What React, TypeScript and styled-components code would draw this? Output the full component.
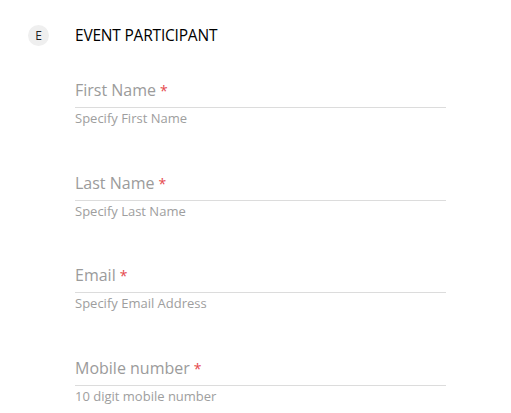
import React from 'react';
import styled, {createGlobalStyle} from 'styled-components';

const GlobalStyle = createGlobalStyle`
    body {
        margin: 0;
        background-color: white;
        font-family: "Open Sans", "Liberation Sans", sans-serif;
    }
`;

const Page = styled.div`
    box-sizing: border-box;
    width: 511px;
    padding: 24px 65px 0 28px;
`;

const Header = styled.div`
    display: flex;
    align-items: center;
    gap: 26px;
    height: 22px;
`;

const Badge = styled.span`
    width: 21px;
    height: 21px;
    border-radius: 50%;
    background-color: #efefef;
    color: #222;
    font-size: 12px;
    display: flex;
    align-items: center;
    justify-content: center;
`;

const Title = styled.h3`
    margin: 0;
    font-size: 15.5px;
    font-weight: 400;
    color: #000;
    text-transform: uppercase;
    letter-spacing: -0.2px;
`;

const Fields = styled.div`
    display: flex;
    flex-direction: column;
    gap: 42.5px;
    padding: 33px 0 0 47px;
`;

const Field = styled.div`
    display: flex;
    flex-direction: column;
    height: 50px;
`;

const Label = styled.label`
    display: block;
    font-size: 16px;
    color: #9b9b9b;
    line-height: 22px;
    height: 22px;
    padding-bottom: 6px;
    border-bottom: 1px solid #dcdcdc;
`;

const Required = styled.span`
    color: #e5484d;
    font-size: 14px;
    margin-left: 4px;
`;

const Hint = styled.span`
    display: block;
    font-size: 13px;
    color: #9e9e9e;
    line-height: 20px;
    height: 20px;
`;

interface IField {
    label: string;
    hint: string;
}

const fields: IField[] = [
    {label: 'First Name', hint: 'Specify First Name'},
    {label: 'Last Name', hint: 'Specify Last Name'},
    {label: 'Email', hint: 'Specify Email Address'},
    {label: 'Mobile number', hint: '10 digit mobile number'},
];

function App() {
    return (
        <Page>
            <GlobalStyle />
            <Header>
                <Badge>E</Badge>
                <Title>Event Participant</Title>
            </Header>
            <Fields>
                {fields.map((f) => (
                    <Field key={f.label}>
                        <Label>
                            {f.label}
                            <Required>*</Required>
                        </Label>
                        <Hint>{f.hint}</Hint>
                    </Field>
                ))}
            </Fields>
        </Page>
    );
}

export default App;
